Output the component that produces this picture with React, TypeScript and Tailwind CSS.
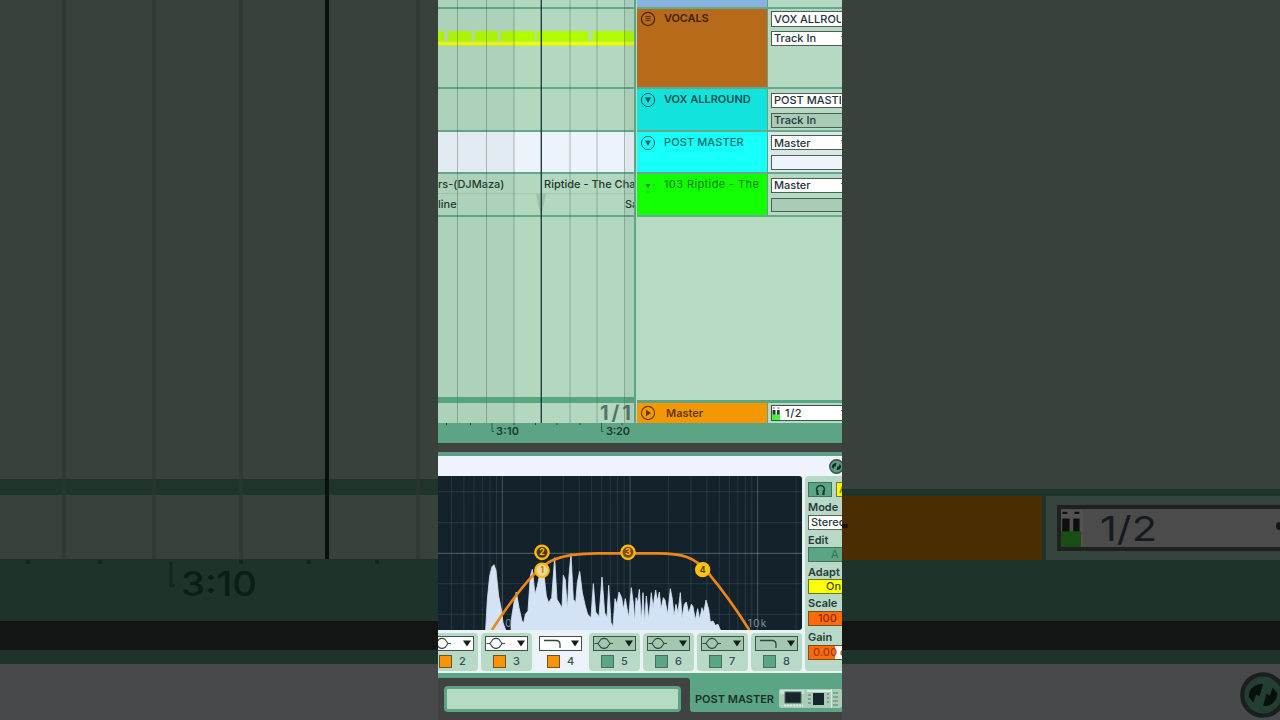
import React from 'react';

interface Track {
  name: string;
  row: string;
  header: string;
  label: string;
  icon: 'group' | 'fold' | 'bare';
  inputs: { text: string; box: string; arrow: boolean }[];
}

const tracks: Track[] = [
  {
    name: 'VOCALS',
    row: 'h-[80px]',
    header: 'bg-[#b76b1a] text-[#402404] font-semibold tracking-[-0.1px]',
    label: 'pt-[3px]',
    icon: 'group',
    inputs: [
      { text: 'VOX ALLROUND', box: 'mt-[2px] h-[16px] bg-white', arrow: false },
      { text: 'Track In', box: 'mt-[4px] h-[15px] bg-white', arrow: true },
    ],
  },
  {
    name: 'VOX ALLROUND',
    row: 'h-[43px]',
    header: 'bg-[#12e3dc] text-[#08524f] font-semibold tracking-[0px]',
    label: 'pt-[4px]',
    icon: 'fold',
    inputs: [
      { text: 'POST MASTER', box: 'mt-[4px] h-[15px] bg-white', arrow: false },
      { text: 'Track In', box: 'mt-[5px] h-[15px] bg-[#a9ccb4]', arrow: false },
    ],
  },
  {
    name: 'POST MASTER',
    row: 'h-[42px]',
    header: 'bg-[#16fffb] text-[#0b6c68] font-medium tracking-[0.1px]',
    label: 'pt-[4px]',
    icon: 'fold',
    inputs: [
      { text: 'Master', box: 'mt-[3px] h-[15px] bg-white pt-px', arrow: true },
      { text: '', box: 'mt-[5px] h-[15px] bg-[#eef3fc]', arrow: false },
    ],
  },
  {
    name: '103 Riptide - The',
    row: 'h-[43px]',
    header: 'bg-[#13ff03] text-[#0b7d09] font-normal tracking-[0.4px]',
    label: 'pt-[4px]',
    icon: 'bare',
    inputs: [
      { text: 'Master', box: 'mt-[4px] h-[15px] bg-white', arrow: true },
      { text: '', box: 'mt-[5px] h-[14px] bg-[#a9ccb4]', arrow: false },
    ],
  },
];

const bands = [
  { n: 2, on: true, shape: 'bell', cell: 'w-[40px] bg-[#b8d9c5] rounded-r-[4px]' },
  { n: 3, on: true, shape: 'bell', cell: 'w-[51px] bg-[#b8d9c5] rounded-[4px]' },
  { n: 4, on: true, shape: 'cut', cell: 'w-[51px] bg-[#eef3fb] rounded-[4px]' },
  { n: 5, on: false, shape: 'bell', cell: 'w-[51px] bg-[#b8d9c5] rounded-[4px]' },
  { n: 6, on: false, shape: 'bell', cell: 'w-[51px] bg-[#b8d9c5] rounded-[4px]' },
  { n: 7, on: false, shape: 'bell', cell: 'w-[51px] bg-[#b8d9c5] rounded-[4px]' },
  { n: 8, on: false, shape: 'cut', cell: 'w-[51px] bg-[#b8d9c5] rounded-[4px]' },
];

const beatLines = [19.5, 48.5, 76, 132, 159, 186.5];

const notes = [
  [0, 6],
  [10.5, 23],
  [37, 22.5],
  [63, 33.5],
  [99, 51],
  [155, 42],
];

// one vertical line per frequency step, three decades
const freqs = [
  40, 50, 60, 70, 80, 90, 100, 200, 300, 400, 500, 600, 700, 800, 900, 1000, 2000, 3000, 4000,
  5000, 6000, 7000, 8000, 9000, 10000, 20000,
];
const freqX = (f: number) => 193 + 383 * Math.log10(f / 100);

const spectrum =
  'M143 462 L148 370 L155 300 L162 272 L168 266 L174 283 L182 360 L190 400 L195 440 L203 462 Z ' +
  'M215 462 L220 430 L228 380 L235 348 L243 395 L252 435 L257 440 L262 415 L270 405 L277 300 L283 280 L291 355 L298 330 L305 295 L318 295 L325 360 L332 380 L341 365 L350 245 L357 370 L363 380 L372 395 L376 298 L382 312 L388 400 L393 300 L399 233 L406 370 L413 380 L418 320 L425 286 L433 350 L442 390 L449 415 L459 425 L466 323 L473 408 L483 422 L492 303 L500 410 L507 425 L512 328 L519 440 L525 452 L531 368 L537 385 L543 348 L551 365 L556 400 L562 368 L572 425 L580 335 L587 390 L590 440 L594 365 ' +
  'L599 380 L604 340 L610 435 L615 350 L620 440 L625 360 L632 430 L640 350 L645 395 L653 342 L658 375 L664 348 L669 400 L676 365 L681 372 L689 415 L697 338 L703 370 L708 420 L714 385 L720 410 L727 350 L732 425 L739 385 L745 378 L752 412 L760 385 L765 392 L772 432 L779 398 L785 430 L792 395 L797 410 L804 372 L812 400 L817 438 L825 435 L832 448 L840 445 L847 462 Z';

const GroupIcon = () => (
  <svg width="16" height="16" viewBox="0 0 16 16" fill="none" stroke="currentColor">
    <circle cx="8" cy="8" r="6.6" strokeWidth="1.2" />
    <path d="M5.500 5.500h5M5.500 7.500h5M5.500 9.500h5" strokeWidth="0.9" />
  </svg>
);

const FoldIcon = ({ bare }: { bare: boolean }) => (
  <svg width="16" height="16" viewBox="0 0 16 16">
    {!bare && <circle cx="8" cy="8" r="6.6" fill="none" stroke="currentColor" />}
    <path d={bare ? 'M5.5 7h5L8 11z' : 'M5 5.6h6L8 11z'} fill="currentColor" />
    {bare && <path d="M6 15h4M14 7v2" stroke="currentColor" strokeWidth="0.8" opacity="0.6" />}
  </svg>
);

const SwapIcon = ({ className }: { className: string }) => (
  <svg viewBox="0 0 16 16" className={className}>
    <circle cx="8" cy="8" r="7.2" fill="#5a9b82" stroke="#3c4f4a" strokeWidth="1.5" />
    <path d="M3 8.6C3 5.8 5.3 4 8 4.2L6.8 8.4L5.6 7.8L4.6 10.6z" fill="#10271f" />
    <path d="M13 7.4c0 2.8-2.3 4.6-5 4.4l1.2-4.2l1.2.6l1-2.8z" fill="#10271f" />
  </svg>
);

const Meter = ({ className }: { className: string }) => (
  <svg viewBox="0 0 9 13" preserveAspectRatio="none" className={className}>
    <rect width="9" height="13" fill="#fff" />
    <path d="M0.6 1h2M5.5 1h2" stroke="#333" strokeWidth="0.8" />
    <rect x="0.5" y="3" width="3" height="5" fill="#2a3330" />
    <rect x="5" y="3" width="2.6" height="5" fill="#2a3330" />
    <rect y="7.5" width="8.2" height="5.5" fill="#4af33a" />
  </svg>
);

const TrackRow = ({ track }: { track: Track }) => (
  <div className={`flex shrink-0 border-b-2 border-[#65a88b] ${track.row}`}>
    <div className={`flex w-[131px] items-start border-r border-[#5ba584] pl-[3px] text-[11px] ${track.header}`}>
      <div className={`flex items-start ${track.label}`}>
        <span className="-mt-px shrink-0">
          {track.icon === 'group' ? <GroupIcon /> : <FoldIcon bare={track.icon === 'bare'} />}
        </span>
        <span className="ml-[8px] leading-[13px] whitespace-nowrap">{track.name}</span>
      </div>
    </div>
    <div className={`flex-1 overflow-hidden pl-[3px] ${track.name === 'POST MASTER' ? 'bg-[#d9e8e6]' : ''}`}>
      {track.inputs.map((input, i) => (
        <div key={i} className={`flex w-[90px] items-center border border-[#4c5e56] pl-[2px] text-[11px] font-medium text-[#26323a] ${input.box}`}>
          <span className="w-[67px] overflow-hidden leading-[13px] whitespace-nowrap">{input.text}</span>
          {input.arrow && (
            <svg width="8" height="6" viewBox="0 0 8 6">
              <path d="M0 0h8L4 6z" fill="#222" />
            </svg>
          )}
        </div>
      ))}
    </div>
  </div>
);

const Lanes = () => (
  <div className="relative flex w-[198px] shrink-0 flex-col overflow-hidden border-r-2 border-[#5ba584] bg-[#b3d8c0] text-[11px] font-medium text-[#24392e]">
    <div className="h-[9px] shrink-0 border-b-2 border-[#65a88b]" />
    <div className="h-[80px] shrink-0 border-b-2 border-[#65a88b] pt-[22px]">
      <svg width="198" height="16" viewBox="0 0 198 16">
        <rect width="198" height="11" fill="#b9dda0" />
        {notes.map(([x, w]) => (
          <rect key={x} x={x} width={w} height="11" fill="#b0fb00" />
        ))}
        <rect y="10" width="198" height="5" fill="#c9f52a" />
        <rect y="11.5" width="198" height="2.2" fill="#fff71a" />
      </svg>
    </div>
    <div className="h-[43px] shrink-0 border-b-2 border-[#65a88b]" />
    <div className="h-[42px] shrink-0 border-b-2 border-[#65a88b] bg-[#edf3fb]" />
    <div className="h-[43px] shrink-0 border-b-2 border-[#65a88b]">
      <div className="flex h-[20px] items-center border-b border-[#a2c9b1] pt-[2px] whitespace-nowrap">
        <span className="w-[106px] shrink-0">rs-(DJMaza)</span>
        <span className="shrink-0">Riptide - The Chain</span>
      </div>
      <div className="flex h-[20px] items-center">
        <span className="w-[187px] shrink-0">line</span>
        <span className="shrink-0">Sa</span>
      </div>
    </div>
    <div className="flex-1" />
    <div className="h-[6px] shrink-0 bg-[#5ba584]" />
    <div className="flex h-[20px] shrink-0 items-center justify-end text-[20px] leading-[20px] font-bold tracking-[3px] text-[#567564]">
      1/1
    </div>
    <svg width="198" height="423" viewBox="0 0 198 423" className="absolute top-0 left-0">
      <rect width="76" height="423" fill="#3c5a48" opacity="0.05" />
      <rect x="187" width="11" height="423" fill="#3c5a48" opacity="0.08" />
      {beatLines.map((x) => (
        <path key={x} d={`M${x} 0V423`} stroke="#466a56" strokeWidth="1" opacity="0.42" />
      ))}
      <path d="M98 194h10l-4 19h-2z" fill="#5a7d69" opacity="0.25" />
      <path d="M103.3 0V423" stroke="#203e3a" strokeWidth="1.4" />
    </svg>
  </div>
);

const Ruler = () => (
  <svg width="404" height="20" viewBox="0 0 404 20" className="block shrink-0 bg-[#5ba584]">
    <path
      d="M8.5 0v2M32.5 0v2M76 0v2M97.5 0v2M119 0v2M142 0v2M184 0v2"
      stroke="#264b3b"
      strokeWidth="1"
    />
    <path d="M54 0V8.5h2M163.5 0V8.5h2" fill="none" stroke="#2f5c49" />
    <g fontFamily="Inter, sans-serif" fontSize="11" fontWeight="600" fill="#1d3a2e">
      <text x="58" y="12" textLength="23">3:10</text>
      <text x="168" y="12" textLength="24">3:20</text>
    </g>
  </svg>
);

const Arrangement = () => (
  <div className="flex h-[423px] shrink-0">
    <Lanes />
    <div className="flex flex-1 flex-col overflow-hidden bg-[#b5d9c3] pl-px">
      <div className="flex h-[9px] shrink-0 border-b-2 border-[#65a88b]">
        <div className="w-[131px] border-r border-[#5ba584] bg-[#87b4df]" />
      </div>
      {tracks.map((t) => (
        <TrackRow key={t.name} track={t} />
      ))}
      <div className="flex-1 bg-[#b5dbc3]" />
      <div className="h-[3px] shrink-0 bg-[#5ba584]" />
      <div className="flex h-[20px] shrink-0">
        <div className="flex w-[131px] items-center border-r border-[#5ba584] bg-[#f59700] pl-[3px] text-[11px] font-semibold text-[#613b00]">
          <svg width="16" height="16" viewBox="0 0 16 16">
            <circle cx="8" cy="8" r="6.6" fill="none" stroke="currentColor" strokeWidth="1.1" />
            <path d="M6 4.8v6.4L11 8z" fill="currentColor" />
          </svg>
          <span className="ml-[10px] leading-[13px]">Master</span>
        </div>
        <div className="flex-1 overflow-hidden pt-[2px] pl-[3px]">
          <div className="flex h-[16px] w-[90px] items-center border border-[#3f5149] bg-white text-[11px] font-medium text-[#26323a]">
            <Meter className="h-[13px] w-[9px]" />
            <span className="ml-[4px] w-[56px] leading-[13px] tracking-[0.6px]">1/2</span>
            <svg width="8" height="6" viewBox="0 0 8 6">
              <path d="M0 0h8L4 6z" fill="#222" />
            </svg>
          </div>
        </div>
      </div>
    </div>
  </div>
);

const EqDisplay = () => (
  <svg width="364" height="154" viewBox="0 0 1092 462" className="block rounded-tr-[3px] rounded-br-[3px] bg-[#14222b]">
    {freqs.map((f) => (
      <path
        key={f}
        d={`M${freqX(f)} 0V462`}
        stroke="#a9bfca"
        strokeWidth="3"
        opacity={f === 100 || f === 1000 || f === 10000 ? 0.32 : 0.13}
      />
    ))}
    {[47, 140, 323, 415].map((y) => (
      <path key={y} d={`M0 ${y}H1092`} stroke="#a9bfca" strokeWidth="3" opacity="0.13" />
    ))}
    <path d="M0 232H1092" stroke="#a9bfca" strokeWidth="3" opacity="0.42" />
    <path d={spectrum} fill="#d3e2f4" stroke="#d3e2f4" strokeWidth="2.5" strokeLinejoin="round" />
    <path d="M204 432h14v30h-14z" fill="#14222b" />
    <g fontFamily="Inter, sans-serif" fontSize="30" fill="#84929a">
      <text x="202" y="454">0</text>
      <text x="929" y="454" textLength="56">10k</text>
    </g>
    <path
      d="M162 462C185 425 240 345 285 298C320 262 350 232 480 232H660C730 232 770 242 810 290C850 338 895 400 934 462"
      fill="none"
      stroke="#f0861a"
      strokeWidth="8"
    />
    <g fontFamily="Inter, sans-serif" fontSize="26" fontWeight="700" textAnchor="middle">
      <circle cx="312" cy="283" r="20" fill="#e9d9a0" stroke="#fdb913" strokeWidth="7" />
      <text x="312" y="292" fill="#c47c00">1</text>
      <circle cx="312" cy="229" r="20" fill="#4b3a10" stroke="#fdb913" strokeWidth="7" />
      <text x="312" y="238" fill="#fdb913">2</text>
      <circle cx="570" cy="229" r="20" fill="#7d4a08" stroke="#fdb913" strokeWidth="7" />
      <text x="570" y="238" fill="#fdb913">3</text>
      <circle cx="794" cy="281" r="23" fill="#fdc40f" />
      <text x="794" y="291" fill="#5f3f00">4</text>
    </g>
  </svg>
);

const BandCell = ({ band }: { band: (typeof bands)[number] }) => (
  <div className={`flex h-[38px] shrink-0 flex-col items-end overflow-hidden pt-[3px] pr-[4px] ${band.cell}`}>
    <svg width="43" height="15" viewBox="0 0 43 15" className="shrink-0">
      <rect x="0.5" y="0.5" width="42" height="14" fill={band.on ? '#fff' : '#a3c8b0'} stroke="#3d5248" />
      {band.shape === 'bell' ? (
        <g fill="none" stroke="#34463d" strokeWidth="1.1">
          <path d="M1.500 7.500h3.500M17 7.500h3" />
          <path d="M5 7.500L8 3.300Q11 1.500 14 3.300L17 7.500L14 11.500Q11 13.300 8 11.500Z" />
        </g>
      ) : (
        <path d="M5 4.5H17Q21 4.5 21 8.5V12" fill="none" stroke="#34463d" strokeWidth="1.3" />
      )}
      <path d="M32 4.500h8L36 10.500z" fill="#121c18" />
    </svg>
    <div className="mt-[3px] flex w-[35px] items-center text-[11px] leading-[13px] font-medium text-[#35505a]">
      <span className={`h-[13px] w-[13px] border ${band.on ? 'border-[#6b5327] bg-[#f89406]' : 'border-[#46705e] bg-[#5ba584]'}`} />
      <span className="ml-[7px] pt-px">{band.n}</span>
    </div>
  </div>
);

const EqOptions = () => (
  <div className="flex w-[37px] shrink-0 flex-col overflow-hidden rounded-tl-[4px] rounded-bl-[4px] bg-[#b8d9c5] pl-[3px] text-[11px] leading-[13px] font-semibold whitespace-nowrap text-[#273b3c]">
    <div className="mt-[6px] flex w-[60px] gap-[4px]">
      <div className="flex h-[15px] w-[24px] items-center justify-center border border-[#46705e] bg-[#5ba584]">
        <svg width="13" height="12" viewBox="0 0 13 12" fill="none" stroke="#1b392d" strokeWidth="1.5">
          <path d="M4 8.500A4 4 0 1 1 9 8.500" />
          <path d="M3.300 6v4h1.500M9.700 6v4h-1.500" strokeWidth="1.8" />
        </svg>
      </div>
      <div className="h-[15px] w-[25px] border border-[#777a20] bg-[#fbf808] pl-[2px] text-[#8a8a10]">A</div>
    </div>
    <span className="mt-[4px]">Mode</span>
    <div className="mt-[1px] h-[15px] w-[60px] border border-[#5b6560] bg-white pl-[2px] font-medium">Stereo</div>
    <span className="mt-[4px]">Edit</span>
    <div className="h-[15px] w-[60px] border border-[#46705e] bg-[#5ba584] pl-[22px] font-normal text-[#35705a]">A</div>
    <span className="mt-[4px]">Adapt</span>
    <div className="h-[15px] w-[60px] border border-[#6d7518] bg-[#fdfd05] pl-[17px] font-medium text-[#4c4f10]">On</div>
    <span className="mt-[3px]">Scale</span>
    <div className="mt-[1px] h-[15px] w-[60px] border border-[#7b4a20] bg-[#ff6a0a] pl-[9px] font-medium text-[#8d2b00]">100</div>
    <span className="mt-[5px]">Gain</span>
    <div className="mt-[1px] flex h-[15px] w-[60px] border border-[#7b4a20] bg-white font-medium text-[#a03a08]">
      <div className="w-[26px] bg-[#ff6a0a] pl-[4px]">0.00 dB</div>
    </div>
  </div>
);

const Device = () => (
  <div className="flex h-[217px] shrink-0 flex-col bg-[#eaf3f4]">
    <div className="flex h-[20px] shrink-0 items-center bg-[#eef3fc]">
      <SwapIcon className="ml-[391px] h-[15px] w-[15px] shrink-0" />
    </div>
    <div className="flex h-[195px]">
      <div className="w-[364px] shrink-0">
        <EqDisplay />
        <div className="flex gap-[3px] pt-[3px]">
          {bands.map((b) => (
            <BandCell key={b.n} band={b} />
          ))}
        </div>
      </div>
      <div className="w-[3px] shrink-0" />
      <EqOptions />
    </div>
  </div>
);

const Footer = () => (
  <div className="flex flex-1 flex-col bg-[#414242]">
    <div className="h-[5px] shrink-0 bg-[#5ba584]" />
    <div className="flex h-[34px] shrink-0">
      <div className="flex w-[252px] shrink-0 bg-[#5ba584]">
        <div className="h-[34px] w-[252px] rounded-tr-[3px] bg-[#414242] pt-[8px] pl-[6px]">
          <div className="h-[26px] w-[237px] rounded-[4px] border-3 border-[#5ba584] bg-[#b5dbc3]" />
        </div>
      </div>
      <div className="flex flex-1 items-center overflow-hidden rounded-bl-[3px] bg-[#5ba584] pl-[5px] text-[11px] font-semibold whitespace-nowrap text-[#173328]">
        <span className="w-[84px] shrink-0 pt-[9px]">POST MASTER</span>
        <svg width="63" height="19" viewBox="0 0 63 19" className="mt-[7px] shrink-0">
          <rect width="63" height="19" rx="2" fill="#a9cdb7" />
          <rect x="1" y="1" width="24" height="4" fill="#cfe2da" />
          <rect x="6" y="3" width="16" height="11" fill="#17252c" stroke="#4d675d" />
          <path d="M5 16.500h19" stroke="#dcebe2" strokeWidth="2" strokeDasharray="2 1" />
          <path d="M28 2h24" stroke="#dcebe2" strokeWidth="2" />
          <rect x="34" y="4" width="11" height="12" fill="#17252c" />
          <path d="M29 6h3M29 10h3M29 14h3M48 5h2M48 9h2M48 13h2M54 4h5M54 8h5M54 12h5M54 16h5" stroke="#54796a" />
          <path d="M52.500 0v19" stroke="#dcebe2" />
        </svg>
      </div>
    </div>
  </div>
);

// dimmed, enlarged backdrop on both sides of the portrait view
const BackdropLeft = () => (
  <div className="relative flex w-[438px] shrink-0 flex-col bg-[#38413a]">
    <div className="h-[479px] shrink-0" />
    <div className="h-[16px] shrink-0 bg-[#1f352b]" />
    <div className="h-[64px] shrink-0" />
    <div className="h-[62px] shrink-0 bg-[#1e3329] pt-[3px] pl-[181px]">
      <svg width="78" height="44" viewBox="0 0 78 44">
        <text x="0" y="34" textLength="76" lengthAdjust="spacingAndGlyphs" fontSize="34" fontFamily="Inter, sans-serif" fontWeight="500" fill="#0d1d17">
          3:10
        </text>
      </svg>
    </div>
    <div className="h-[29px] shrink-0 bg-[#131515]" />
    <div className="h-[14px] shrink-0 bg-[#1e332a]" />
    <div className="flex-1 bg-[#48494b]" />
    <svg width="438" height="720" viewBox="0 0 438 720" className="absolute top-0 left-0">
      {[64, 154, 241, 418].map((x) => (
        <path key={x} d={`M${x} 0V559`} stroke="#2c372f" strokeWidth="4" opacity="0.6" />
      ))}
      <path d="M327 0V559" stroke="#07110e" strokeWidth="4" />
      <path d="M28 560v4M100 560v4M241 560v4M309 560v4M377 560v4" stroke="#14281f" strokeWidth="4" />
      <path d="M171 562v24h4" fill="none" stroke="#14281f" strokeWidth="3" />
    </svg>
  </div>
);

const BackdropRight = () => (
  <div className="flex w-[438px] shrink-0 flex-col overflow-hidden bg-[#38413a]">
    <div className="h-[489px] shrink-0" />
    <div className="h-[7px] shrink-0 bg-[#1f352b]" />
    <div className="flex h-[64px] shrink-0">
      <div className="w-[200px] shrink-0 bg-[#4a2d02] pt-[28px]">
        <div className="h-[4px] w-[6px] rounded-r-[2px] bg-[#1c1203]" />
      </div>
      <div className="w-[4px] shrink-0 bg-[#1f352b]" />
      <div className="flex-1 overflow-hidden bg-[#35443c] pt-[9px] pl-[11px]">
        <div className="flex h-[46px] w-[240px] items-center border-4 border-[#1e2120] bg-[#4b4b4b]">
          <Meter className="h-[37px] w-[22px] shrink-0 brightness-[0.32]" />
          <svg width="60" height="37" viewBox="0 0 60 37" className="ml-[17px] shrink-0">
            <text x="0" y="31" textLength="57" lengthAdjust="spacingAndGlyphs" fontFamily="Inter, sans-serif" fontSize="34" fontWeight="400" fill="#151a20">
              1/2
            </text>
          </svg>
          <div className="mb-[4px] ml-[116px] h-[8px] w-[8px] shrink-0 rounded-l-[4px] bg-[#141616]" />
        </div>
      </div>
    </div>
    <div className="h-[61px] shrink-0 bg-[#1e3329]" />
    <div className="h-[29px] shrink-0 bg-[#131515]" />
    <div className="h-[14px] shrink-0 bg-[#1e332a]" />
    <div className="flex flex-1 items-center bg-[#48494b]">
      <SwapIcon className="mt-[6px] ml-[398px] h-[46px] w-[46px] shrink-0 brightness-[0.4]" />
    </div>
  </div>
);

const App: React.FC = () => {
  return (
    <div className="flex h-[720px] w-[1280px] overflow-hidden bg-[#38413a] font-['Inter',sans-serif]">
      <BackdropLeft />
      <main className="flex w-[404px] shrink-0 flex-col overflow-hidden">
        <Arrangement />
        <Ruler />
        <div className="h-[9px] shrink-0 bg-[#414343]" />
        <div className="h-[4px] shrink-0 bg-[#5c9f84]" />
        <div className="flex h-[264px] shrink-0 flex-col">
          <Device />
          <Footer />
        </div>
      </main>
      <BackdropRight />
    </div>
  );
};

export default App;
